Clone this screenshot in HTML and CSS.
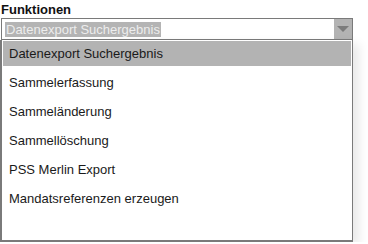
FILE: index.html
```html
<!DOCTYPE html>
<html>
<head>
<meta charset="utf-8">
<link rel="stylesheet" href="styles.css">
</head>
<body>
<div class="field">
  <div class="label">Funktionen</div>
  <div class="combo">
    <div class="select">
      <span class="value"><span class="sel-text">Datenexport Suchergebnis</span></span>
      <span class="arrow"><svg width="12" height="7" viewBox="0 0 12 7"><polygon points="0,0 12,0 6,6" fill="#7b7b7b"/></svg></span>
    </div>
    <ul class="list">
      <li class="item active">Datenexport Suchergebnis</li>
      <li class="item">Sammelerfassung</li>
      <li class="item">Sammeländerung</li>
      <li class="item">Sammellöschung</li>
      <li class="item">PSS Merlin Export</li>
      <li class="item">Mandatsreferenzen erzeugen</li>
    </ul>
  </div>
</div>
</body>
</html>
```

FILE: styles.css
```css
html, body {
  margin: 0;
  padding: 0;
  background: #ffffff;
}
body {
  font-family: "Liberation Sans", Arial, sans-serif;
  font-size: 13px;
  color: #1a1a1a;
}
.field {
  display: flex;
  flex-direction: column;
  width: 353px;
}
.label {
  font-weight: bold;
  font-size: 13px;
  line-height: 16px;
  height: 16px;
  padding-top: 2px;
  padding-left: 1px;
  color: #111;
}
.combo {
  display: flex;
  flex-direction: column;
}
.select {
  display: flex;
  height: 20px;
  border: 1px solid #7a7a7a;
  margin-left: 1px;
  background: #fff;
}
.value {
  flex: 1;
  display: flex;
  align-items: center;
  padding-left: 3px;
}
.sel-text {
  background: #b4b4b4;
  color: #ededed;
  line-height: 15px;
  padding: 0 1px;
}
.arrow {
  width: 18px;
  background: #b3b3b3;
  display: flex;
  align-items: center;
  justify-content: center;
}
.list {
  list-style: none;
  margin: 0;
  padding: 1px 1px 0 1px;
  height: 199px;
  border-left: 2px solid #7a7a7a;
  border-right: 1px solid #7a7a7a;
  border-bottom: 2px solid #7a7a7a;
  background: #fff;
  box-shadow: 6px 4px 10px rgba(0, 0, 0, 0.09);
}
.item {
  height: 29px;
  line-height: 27px;
  padding-left: 6px;
  color: #1a1a1a;
}
.item.active {
  background: #b3b3b3;
  height: 25px;
  line-height: 26px;
  margin-bottom: 3px;
}
```
